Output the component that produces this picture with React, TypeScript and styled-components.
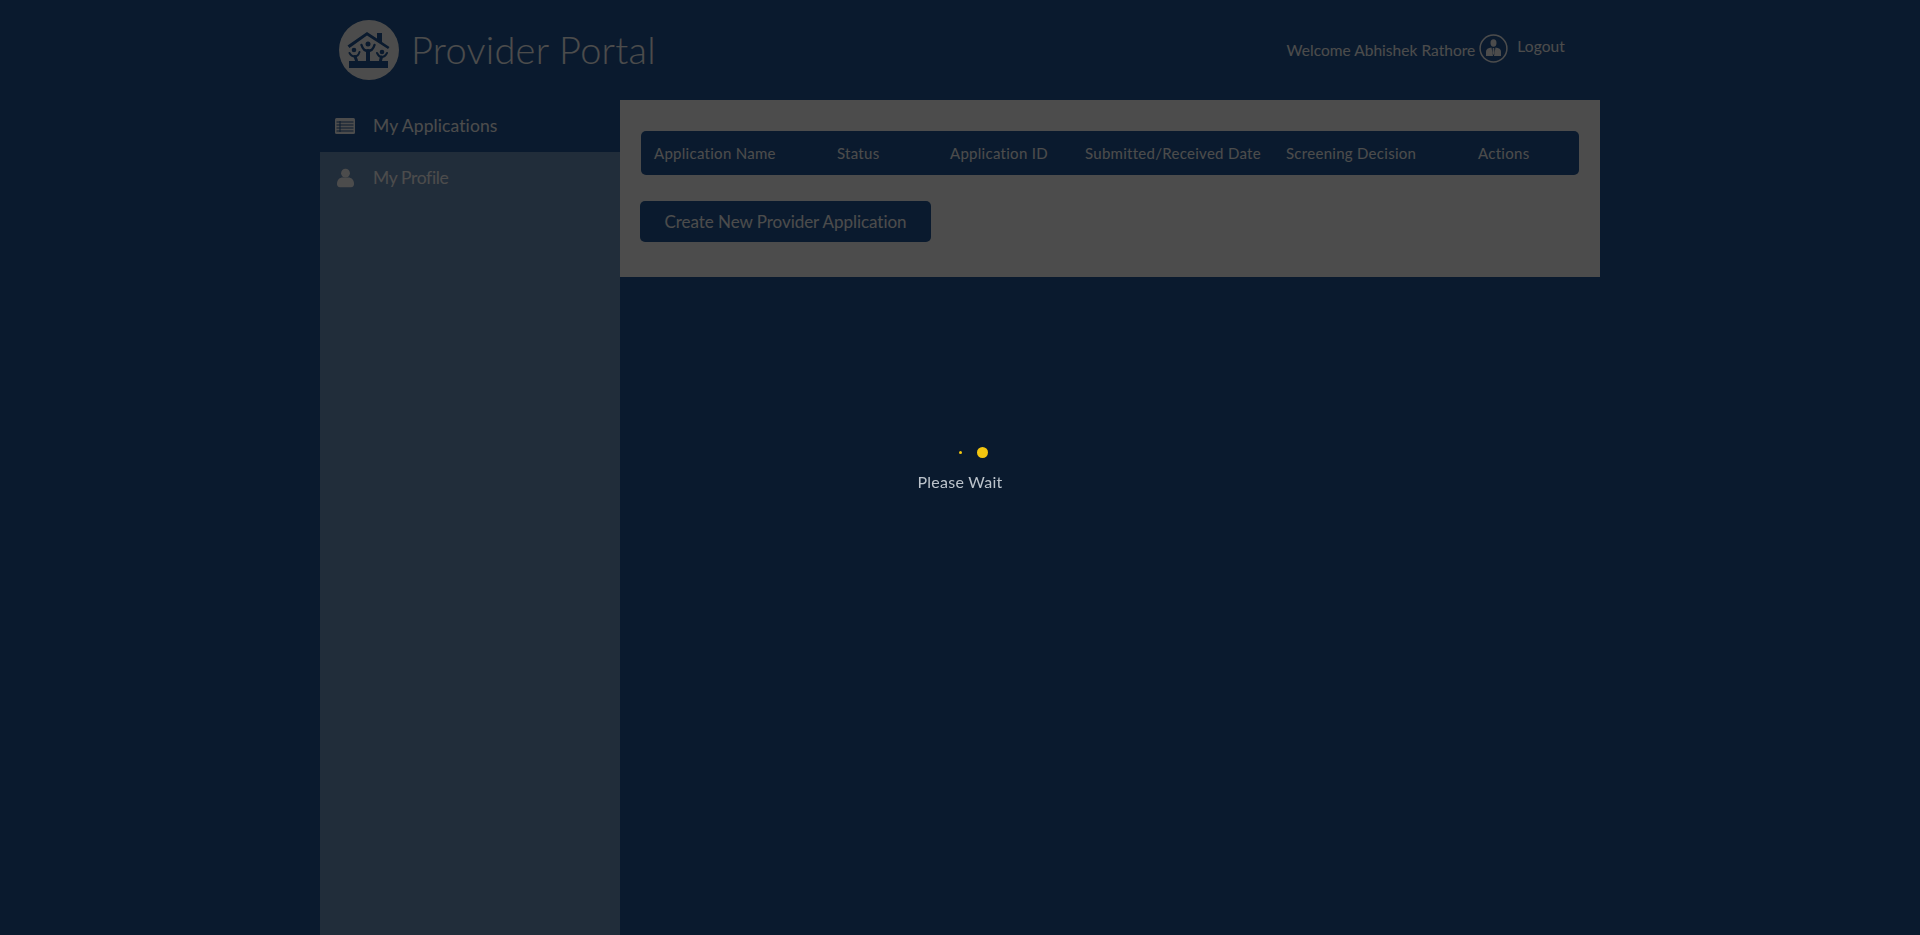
import React from "react";
import styled, { createGlobalStyle } from "styled-components";

const Global = createGlobalStyle`
  html, body { margin: 0; height: 100%; background: #225899; overflow: hidden; }
  body { font-family: Lato, "Liberation Sans", sans-serif; color: #fff; }
  * { box-sizing: border-box; }
`;

const Page = styled.div`
  width: 1280px;
  height: 935px;
  margin: 0 auto;
  display: flex;
  flex-direction: column;
`;
const Header = styled.header`
  height: 100px;
  flex: none;
  display: flex;
  align-items: flex-start;
  justify-content: space-between;
`;
const Brand = styled.div`
  display: flex;
  align-items: center;
  gap: 12px;
  padding: 20px 0 0 19px;
`;
const BrandLogo = styled.svg`
  width: 60px;
  height: 60px;
  display: block;
`;
const Title = styled.h1`
  margin: 0 0 2px;
  font-size: 38px;
  line-height: 58px;
  font-weight: 300;
  letter-spacing: 0.25px;
`;
const UserBar = styled.div`
  display: flex;
  align-items: flex-start;
  padding: 34px 35px 0 0;
`;
const Welcome = styled.span`
  font-size: 15.5px;
  line-height: 32px;
  letter-spacing: 0.03px;
`;
const Avatar = styled.svg`
  width: 29px;
  height: 29px;
  margin: 0 9px 0 4px;
  display: block;
`;
const Logout = styled.a`
  font-size: 15.5px;
  line-height: 24px;
  letter-spacing: 0.1px;
`;
const Body = styled.div`
  flex: 1;
  display: flex;
  min-height: 0;
`;
const Sidebar = styled.nav`
  width: 300px;
  flex: none;
  background: #7196c1;
`;
const NavItem = styled.div<{ $active?: boolean; $spacing: number }>`
  height: 52px;
  display: flex;
  align-items: center;
  padding: 0 0 2px 14px;
  font-size: 17.5px;
  letter-spacing: ${(p) => p.$spacing}px;
  background: ${(p) => (p.$active ? "#225899" : "transparent")};
`;
const NavIcon = styled.svg`
  width: 20px;
  height: 20px;
  margin: 2px 18px 0 1px;
  flex: none;
`;
const Main = styled.main`
  width: 980px;
  flex: none;
`;
const Panel = styled.section`
  background: #fff;
  height: 177px;
  padding: 31px 21px 0 20px;
`;
const HeadRow = styled.div`
  margin-left: 1px;
  height: 44px;
  border-radius: 5px;
  background: #225899;
  display: grid;
  grid-template-columns: 183px 113px 135px 201px 192px 1fr;
  align-items: center;
  padding-left: 13px;
  font-size: 15px;
  letter-spacing: 0.28px;
`;
const CreateButton = styled.button`
  display: block;
  margin-top: 26px;
  width: 291px;
  height: 41px;
  border: 0;
  border-radius: 5px;
  background: #225899;
  color: #fff;
  font-family: inherit;
  font-size: 17px;
  letter-spacing: -0.05px;
  padding: 0;
`;
const Overlay = styled.div`
  position: fixed;
  inset: 0;
  background: rgba(0, 0, 0, 0.7);
`;
const Loader = styled.div`
  position: fixed;
  left: 860px;
  top: 440px;
  width: 200px;
  display: flex;
  flex-direction: column;
  align-items: center;
`;
const Dots = styled.div`
  height: 24px;
  width: 100%;
  position: relative;
`;
const Dot = styled.i<{ $size: number; $x: number }>`
  position: absolute;
  left: ${(p) => p.$x - p.$size / 2}px;
  top: ${(p) => 12 - p.$size / 2}px;
  width: ${(p) => p.$size}px;
  height: ${(p) => p.$size}px;
  border-radius: 50%;
  background: #f4c60f;
`;
const WaitText = styled.div`
  font-size: 16px;
  line-height: 20px;
  margin-top: 8px;
  color: #bcc3cb;
  letter-spacing: 0.25px;
`;

const columns = ["Application Name", "Status", "Application ID", "Submitted/Received Date", "Screening Decision", "Actions"];

export default function App() {
  return (
    <>
      <Global />
      <Page>
        <Header>
          <Brand>
            <BrandLogo viewBox="0 0 60 60">
              <circle cx="30" cy="30" r="30" fill="#fff" />
              <g fill="#225899">
                <path d="M8.5 25.5 L28 12 L38 18.5 V13 H43 V22 L50.5 27 L49 29 L28 15.5 L10.5 28 Z" />
                <path d="M10 41 H49 V48 H10 Z" />
                <circle cx="29" cy="24" r="2.5" />
                <circle cx="15" cy="30" r="2.3" />
                <circle cx="43" cy="32" r="2.3" />
              </g>
              <g fill="none" stroke="#225899" strokeLinecap="round">
                <path d="M22.5 25 C24 30 26 30.5 29 31 C32 30.5 34 30 35.5 25" strokeWidth="2.4" />
                <path d="M29 31 V40.5" strokeWidth="4" />
                <path d="M10.5 33 C12 36 14 36.5 16 36.5 C18 36.5 19.5 35 20.5 32" strokeWidth="2" />
                <path d="M16 36.5 L17.5 40.5" strokeWidth="3" />
                <path d="M48 33 C46.5 36 44.5 37 42.5 37 C40.5 37 39.5 36 38 33" strokeWidth="2" />
                <path d="M42.5 37 L41.5 40.5" strokeWidth="3" />
              </g>
            </BrandLogo>
            <Title>Provider Portal</Title>
          </Brand>
          <UserBar>
            <Welcome>Welcome Abhishek Rathore</Welcome>
            <Avatar viewBox="0 0 29 29">
              <circle cx="14.5" cy="14.5" r="13.4" fill="none" stroke="#fff" strokeWidth="1.5" />
              <ellipse cx="14.5" cy="9" rx="3" ry="3.7" fill="#fff" />
              <path d="M7 22 V17.5 C7 15 9 14 12.5 13.5 L14 22 Z" fill="#fff" />
              <path d="M22 22 V17.5 C22 15 20 14 16.5 13.5 L15 22 Z" fill="#fff" />
              <path d="M13.8 14 H15.2 L15.6 19 L14.5 21 L13.4 19 Z" fill="#fff" />
            </Avatar>
            <Logout>Logout</Logout>
          </UserBar>
        </Header>
        <Body>
          <Sidebar>
            <NavItem $active $spacing={0.1}>
              <NavIcon viewBox="0 0 20 20">
                <rect x="0" y="2" width="20" height="16" rx="1.5" fill="#fff" />
                <path d="M1.5 6 H18.5 M1.5 9 H18.5 M1.5 12 H18.5 M1.5 15 H18.5 M5 5 V16" stroke="#225899" strokeWidth="1" />
              </NavIcon>
              My Applications
            </NavItem>
            <NavItem $spacing={-0.35}>
              <NavIcon viewBox="0 0 20 20">
                <circle cx="10.5" cy="5.2" r="4.4" fill="#fff" />
                <path d="M2 16 C2 11.5 5 9.5 7.5 9.5 H13.5 C16 9.5 19 11.5 19 16 C19 18 18 19.2 16 19.2 H5 C3 19.2 2 18 2 16 Z" fill="#fff" />
              </NavIcon>
              My Profile
            </NavItem>
          </Sidebar>
          <Main>
            <Panel>
              <HeadRow>
                {columns.map((c) => (
                  <span key={c}>{c}</span>
                ))}
              </HeadRow>
              <CreateButton>Create New Provider Application</CreateButton>
            </Panel>
          </Main>
        </Body>
      </Page>
      <Overlay />
      <Loader>
        <Dots>
          <Dot $size={3} $x={100} />
          <Dot $size={11} $x={122} />
        </Dots>
        <WaitText>Please Wait</WaitText>
      </Loader>
    </>
  );
}
